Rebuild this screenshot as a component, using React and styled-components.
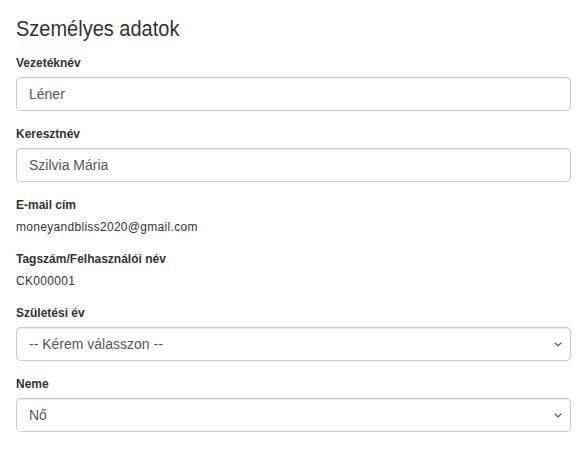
import React from "react";
import styled, { createGlobalStyle } from "styled-components";

const Global = createGlobalStyle`
  html, body { margin: 0; padding: 0; background: #fff; }
  body {
    font-family: "Liberation Sans", Arial, sans-serif;
    font-size: 14px;
    line-height: 1.42857143;
    color: #333;
  }
  * { box-sizing: border-box; }
`;

const Panel = styled.form`
  width: 588px;
  padding: 18px 17px 0 16px;
`;

const Heading = styled.h3`
  margin: 0 0 15px;
  font-size: 20px;
  font-weight: 400;
  line-height: 22px;
  color: #333;
  transform: scaleY(1.08);
  transform-origin: 0 80%;
`;

const Group = styled.div`
  margin-bottom: 15px;
`;

const Label = styled.label`
  display: block;
  margin-bottom: 5px;
  font-size: 12px;
  font-weight: 700;
  line-height: 17px;
  color: #333;
`;

const Static = styled.div`
  font-size: 12px;
  line-height: 17px;
  letter-spacing: 0.3px;
  color: #333;
`;

const fieldCss = `
  display: block;
  width: 100%;
  height: 34px;
  padding: 6px 12px;
  font-family: "Liberation Sans", Arial, sans-serif;
  font-size: 14px;
  line-height: 1.42857143;
  color: #555;
  background: #fff;
  border: 1px solid #ccc;
  border-radius: 4px;
  box-shadow: inset 0 1px 1px rgba(0, 0, 0, 0.075);
  outline: none;
`;

const Input = styled.input`
  ${fieldCss}
`;

const SelectWrap = styled.div`
  position: relative;
`;

const Select = styled.select`
  ${fieldCss}
  appearance: none;
  -webkit-appearance: none;
  padding-right: 30px;
`;

const Chevron = styled.svg`
  position: absolute;
  right: 9px;
  top: 15px;
  width: 8px;
  height: 5px;
  pointer-events: none;
`;

function ChevronIcon() {
  return (
    <Chevron viewBox="0 0 8 5">
      <path d="M0.6 0.6 L4 4 L7.4 0.6" fill="none" stroke="#555" strokeWidth="1.2" />
    </Chevron>
  );
}

function SelectField({ id, label, value, options }) {
  return (
    <Group>
      <Label htmlFor={id}>{label}</Label>
      <SelectWrap>
        <Select id={id} defaultValue={value}>
          {options.map((o) => (
            <option key={o} value={o}>{o}</option>
          ))}
        </Select>
        <ChevronIcon />
      </SelectWrap>
    </Group>
  );
}

export default function App() {
  return (
    <>
      <Global />
      <Panel onSubmit={(e) => e.preventDefault()}>
        <Heading>Személyes adatok</Heading>
        <Group>
          <Label htmlFor="vez">Vezetéknév</Label>
          <Input id="vez" defaultValue="Léner" />
        </Group>
        <Group>
          <Label htmlFor="ker">Keresztnév</Label>
          <Input id="ker" defaultValue="Szilvia Mária" />
        </Group>
        <Group>
          <Label>E-mail cím</Label>
          <Static>moneyandbliss2020@gmail.com</Static>
        </Group>
        <Group>
          <Label>Tagszám/Felhasználói név</Label>
          <Static>CK000001</Static>
        </Group>
        <SelectField
          id="szul"
          label="Születési év"
          value="-- Kérem válasszon --"
          options={["-- Kérem válasszon --", "2000", "1990", "1980"]}
        />
        <SelectField id="nem" label="Neme" value="Nő" options={["Nő", "Férfi"]} />
      </Panel>
    </>
  );
}
